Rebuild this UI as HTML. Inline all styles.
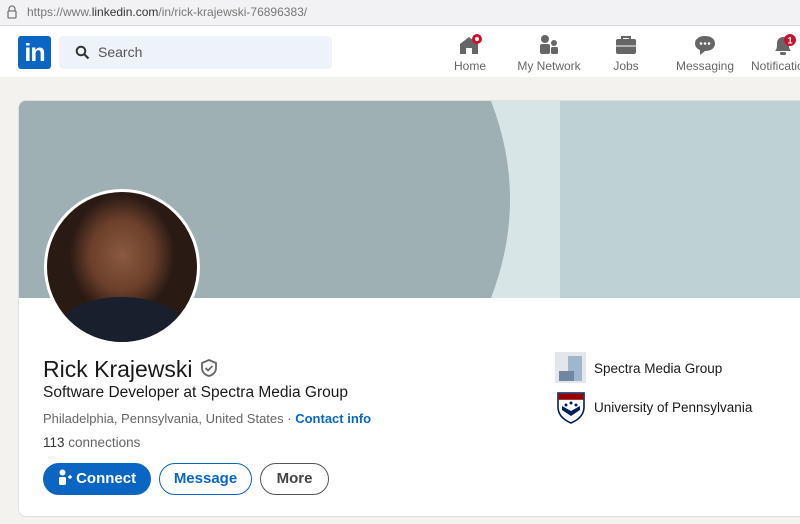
<!DOCTYPE html>
<html><head><style>
*{margin:0;padding:0;box-sizing:border-box}
body{width:800px;height:524px;overflow:hidden;background:#f4f2ee;font-family:"Liberation Sans",sans-serif;position:relative}
.url{position:absolute;left:0;top:0;width:800px;height:26px;background:#f2f2f4;border-bottom:1px solid #d8d8e0}
.url span{position:absolute;left:27px;top:5px;font-size:12px;color:#777}
.nav{position:absolute;left:0;top:26px;width:800px;height:51px;background:#fff}
.logo{position:absolute;left:18px;top:10px;width:33px;height:33px;background:#0a66c2;border-radius:3px;color:#fff;font-weight:bold;font-size:25px;line-height:35px;text-align:center;letter-spacing:-1px}
.search{position:absolute;left:59px;top:10px;width:273px;height:33px;background:#edf3f8;border-radius:4px}
.search span{position:absolute;left:39px;top:8px;font-size:14px;color:#555}
.ni{position:absolute;top:0;text-align:center;font-size:12px;color:#666}
.ni svg{display:block;margin:8px auto 3px}
.card{position:absolute;left:18px;top:100px;width:800px;height:417px;background:#fff;border-radius:8px;overflow:hidden;border:1px solid #e0dfdc}
.ban{position:absolute;left:0;top:0;width:800px;height:197px;background:#bed2d6}
.av{position:absolute;left:25px;top:88px;width:156px;height:156px;border-radius:50%;border:3px solid #fff;background:radial-gradient(ellipse 35% 40% at 50% 42%,#8a5a40 0,#6b3f2a 60%,#2a1a14 100%);overflow:hidden}
.av:after{content:"";position:absolute;left:10px;top:105px;width:130px;height:70px;border-radius:50% 50% 0 0;background:#1a1f2e}
.t{position:absolute;color:#191919;white-space:nowrap}
.btn{position:absolute;top:362px;height:32px;border-radius:16px;font-size:15px;font-weight:bold;line-height:30px;text-align:center}
</style></head><body>
<div class="url"><svg style="position:absolute;left:7px;top:5px" width="10" height="14" viewBox="0 0 10 14"><path d="M2 6V4a3 3 0 0 1 6 0v2" fill="none" stroke="#777" stroke-width="1.3"/><rect x="1" y="6" width="8" height="7" rx="1" fill="none" stroke="#777" stroke-width="1.3"/></svg><span>https://www.<b style="color:#333;font-weight:normal">linkedin.com</b>/in/rick-krajewski-76896383/</span></div>
<div class="nav">
<div class="logo">in</div>
<div class="search"><svg style="position:absolute;left:16px;top:9px" width="15" height="15" viewBox="0 0 15 15"><circle cx="6" cy="6" r="4.3" fill="none" stroke="#333" stroke-width="2"/><path d="M9 9l4.5 4.5" stroke="#333" stroke-width="2.2"/></svg><span>Search</span></div>
<div class="ni" style="left:448px;width:44px"><svg width="24" height="22" viewBox="0 0 24 22"><path d="M2 10L11 3l9 7v10h-6v-6h-6v6H2z" fill="#666"/><circle cx="19" cy="5" r="5" fill="#cb112d"/><circle cx="19" cy="5" r="2" fill="#fff"/></svg>Home</div>
<div class="ni" style="left:515px;width:68px"><svg width="24" height="22" viewBox="0 0 24 22"><circle cx="8" cy="5" r="4" fill="#666"/><rect x="3" y="10" width="10" height="10" rx="2" fill="#666"/><circle cx="17" cy="9" r="3" fill="#666"/><rect x="14" y="13" width="7" height="7" rx="1.5" fill="#666"/></svg>My Network</div>
<div class="ni" style="left:608px;width:36px"><svg width="24" height="22" viewBox="0 0 24 22"><path d="M8 5V3h8v2" fill="none" stroke="#666" stroke-width="2"/><rect x="2" y="5" width="20" height="15" rx="2" fill="#666"/><path d="M2 12h20" stroke="#fff" stroke-width="1"/></svg>Jobs</div>
<div class="ni" style="left:676px;width:58px"><svg width="24" height="22" viewBox="0 0 24 22"><path d="M12 2c6 0 10 3 10 7.5S18 17 12 17l-5 4v-5C4 15 2 12.5 2 9.5 2 5 6 2 12 2z" fill="#666"/><circle cx="8" cy="9.5" r="1.3" fill="#fff"/><circle cx="12" cy="9.5" r="1.3" fill="#fff"/><circle cx="16" cy="9.5" r="1.3" fill="#fff"/></svg>Messaging</div>
<div class="ni" style="left:751px;width:70px;text-align:left"><svg style="margin-left:20px" width="26" height="22" viewBox="0 0 26 22"><path d="M4 17c2-2 2-4 2-8a6 6 0 0 1 12 0c0 4 0 6 2 8z" fill="#666"/><rect x="9" y="18" width="6" height="3" rx="1.5" fill="#666"/><circle cx="19" cy="6" r="6" fill="#cb112d"/><text x="19" y="9.5" font-size="9" fill="#fff" text-anchor="middle" font-family="Liberation Sans" font-weight="bold">1</text></svg>Notifications</div>
</div>
<div class="card">
<div class="ban"><svg width="800" height="197"><rect x="0" y="0" width="541" height="197" fill="#d8e5e7"/><path d="M0 0H472Q510 98 472 197H0z" fill="#9eb0b4"/></svg></div>
<div class="av"></div>
<div class="t" style="left:24px;top:255px;font-size:23px">Rick Krajewski <svg width="20" height="20" viewBox="0 0 20 20" style="vertical-align:-1px"><path d="M10 2l7 3v5c0 4-3 7-7 8-4-1-7-4-7-8V5z" fill="none" stroke="#666" stroke-width="1.8"/><path d="M6.5 10l2.5 2.5 4.5-4.5" fill="none" stroke="#666" stroke-width="1.8"/></svg></div>
<div class="t" style="left:24px;top:283px;font-size:15.5px">Software Developer at Spectra Media Group</div>
<div class="t" style="left:24px;top:310px;font-size:13px;color:#666">Philadelphia, Pennsylvania, United States · <b style="color:#0a66c2">Contact info</b></div>
<div class="t" style="left:24px;top:334px;font-size:13.5px;color:#666"><span style="color:#333">113</span> connections</div>
<div class="btn" style="left:24px;width:108px;background:#0a66c2;color:#fff;border:1px solid #0a66c2"><svg width="14" height="16" viewBox="0 0 14 16" style="vertical-align:-2px"><circle cx="4.5" cy="3.5" r="3" fill="#fff"/><rect x="1" y="8" width="7" height="8" rx="1.5" fill="#fff"/><path d="M10 8h4M12 6v4" stroke="#fff" stroke-width="1.4"/></svg> Connect</div>
<div class="btn" style="left:140px;width:93px;color:#0a66c2;border:1px solid #0a66c2">Message</div>
<div class="btn" style="left:241px;width:69px;color:#444;border:1px solid #555">More</div>
<svg style="position:absolute;left:536px;top:251px" width="31" height="31"><rect width="31" height="31" fill="#e3e6ea"/><rect x="13" y="4" width="14" height="25" fill="#9fb6cc"/><rect x="4" y="19" width="15" height="10" fill="#6f87a0"/></svg>
<div class="t" style="left:575px;top:260px;font-size:13.5px">Spectra Media Group</div>
<svg style="position:absolute;left:538px;top:291px" width="28" height="32" viewBox="0 0 28 32"><path d="M1 1h26v14c0 8-6 13-13 16C7 28 1 23 1 15z" fill="#fff" stroke="#011f5b" stroke-width="1.6"/><rect x="1.8" y="1.8" width="24.4" height="6" fill="#990000"/><path d="M5 14l9 5 9-5v4l-9 6-9-6z" fill="#011f5b"/><circle cx="9" cy="13" r="1.5" fill="#011f5b"/><circle cx="14" cy="11" r="1.5" fill="#011f5b"/><circle cx="19" cy="13" r="1.5" fill="#011f5b"/></svg>
<div class="t" style="left:575px;top:299px;font-size:13.5px">University of Pennsylvania</div>
</div>
</body></html>
